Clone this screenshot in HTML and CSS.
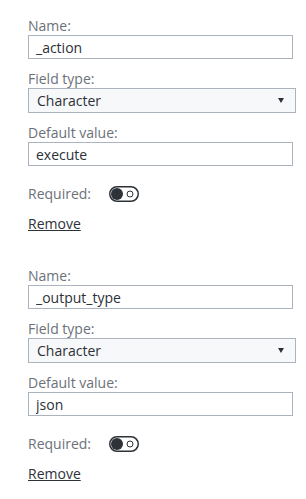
FILE: index.html
```html
<!DOCTYPE html>
<html lang="en">
<head>
    <meta charset="UTF-8">
    <meta name="viewport" content="width=device-width, initial-scale=1.0">
    <title>Parameters</title>
    <link rel="stylesheet" href="styles.css">
</head>
<body>
    <div class="param-list">
        <div class="param">
            <div class="field">
                <label class="field-label">Name:</label>
                <input class="text-input" type="text" value="_action">
            </div>
            <div class="field">
                <label class="field-label">Field type:</label>
                <div class="select-box">
                    <span>Character</span>
                    <span class="arrow"></span>
                </div>
            </div>
            <div class="field">
                <label class="field-label">Default value:</label>
                <input class="text-input" type="text" value="execute">
            </div>
            <div class="required-row">
                <span class="field-label">Required:</span>
                <svg class="toggle" width="30" height="16" viewBox="0 0 30 16">
                    <rect x="0.75" y="0.75" width="28.5" height="14.5" rx="7.25" fill="#fff" stroke="#2d3138" stroke-width="1.5"/>
                    <circle cx="8" cy="8" r="6" fill="#2d3138"/>
                    <circle cx="21" cy="8" r="3" fill="none" stroke="#2d3138" stroke-width="1"/>
                </svg>
            </div>
            <a class="remove-link" href="#">Remove</a>
        </div>

        <div class="param">
            <div class="field">
                <label class="field-label">Name:</label>
                <input class="text-input" type="text" value="_output_type">
            </div>
            <div class="field">
                <label class="field-label">Field type:</label>
                <div class="select-box">
                    <span>Character</span>
                    <span class="arrow"></span>
                </div>
            </div>
            <div class="field">
                <label class="field-label">Default value:</label>
                <input class="text-input" type="text" value="json">
            </div>
            <div class="required-row">
                <span class="field-label">Required:</span>
                <svg class="toggle" width="30" height="16" viewBox="0 0 30 16">
                    <rect x="0.75" y="0.75" width="28.5" height="14.5" rx="7.25" fill="#fff" stroke="#2d3138" stroke-width="1.5"/>
                    <circle cx="8" cy="8" r="6" fill="#2d3138"/>
                    <circle cx="21" cy="8" r="3" fill="none" stroke="#2d3138" stroke-width="1"/>
                </svg>
            </div>
            <a class="remove-link" href="#">Remove</a>
        </div>
    </div>
</body>
</html>
```

FILE: styles.css
```css
body {
    margin: 0;
    background-color: white;
    font-family: "Open Sans", "Noto Sans", sans-serif;
    color: #2d3138;
}
.param-list {
    padding: 17px 0 0 28px;
}
.param {
    height: 250px;
}
.field {
    display: flex;
    flex-direction: column;
    margin-bottom: 11px;
}
.field-label {
    font-size: 14px;
    line-height: 18px;
    color: #6c7179;
}
.text-input {
    box-sizing: border-box;
    width: 265px;
    height: 24px;
    margin: 0;
    padding: 0 7px;
    border: 1px solid #aab3be;
    border-radius: 0;
    font-family: inherit;
    font-size: 14px;
    color: #2d3138;
    background-color: white;
}
.select-box {
    box-sizing: border-box;
    width: 268px;
    height: 25px;
    padding: 0 11px 0 8px;
    border: 1px solid #aab3be;
    background-color: #f7f8fa;
    display: flex;
    align-items: center;
    justify-content: space-between;
    font-size: 14px;
}
.arrow {
    width: 0;
    height: 0;
    border-left: 3px solid transparent;
    border-right: 3px solid transparent;
    border-top: 5px solid #2d3138;
}
.required-row {
    display: flex;
    align-items: center;
    gap: 18px;
    margin-top: 20px;
    height: 16px;
}
.toggle {
    display: block;
}
.remove-link {
    display: inline-block;
    margin-top: 13px;
    font-size: 14px;
    line-height: 18px;
    color: #2d3138;
}
```
